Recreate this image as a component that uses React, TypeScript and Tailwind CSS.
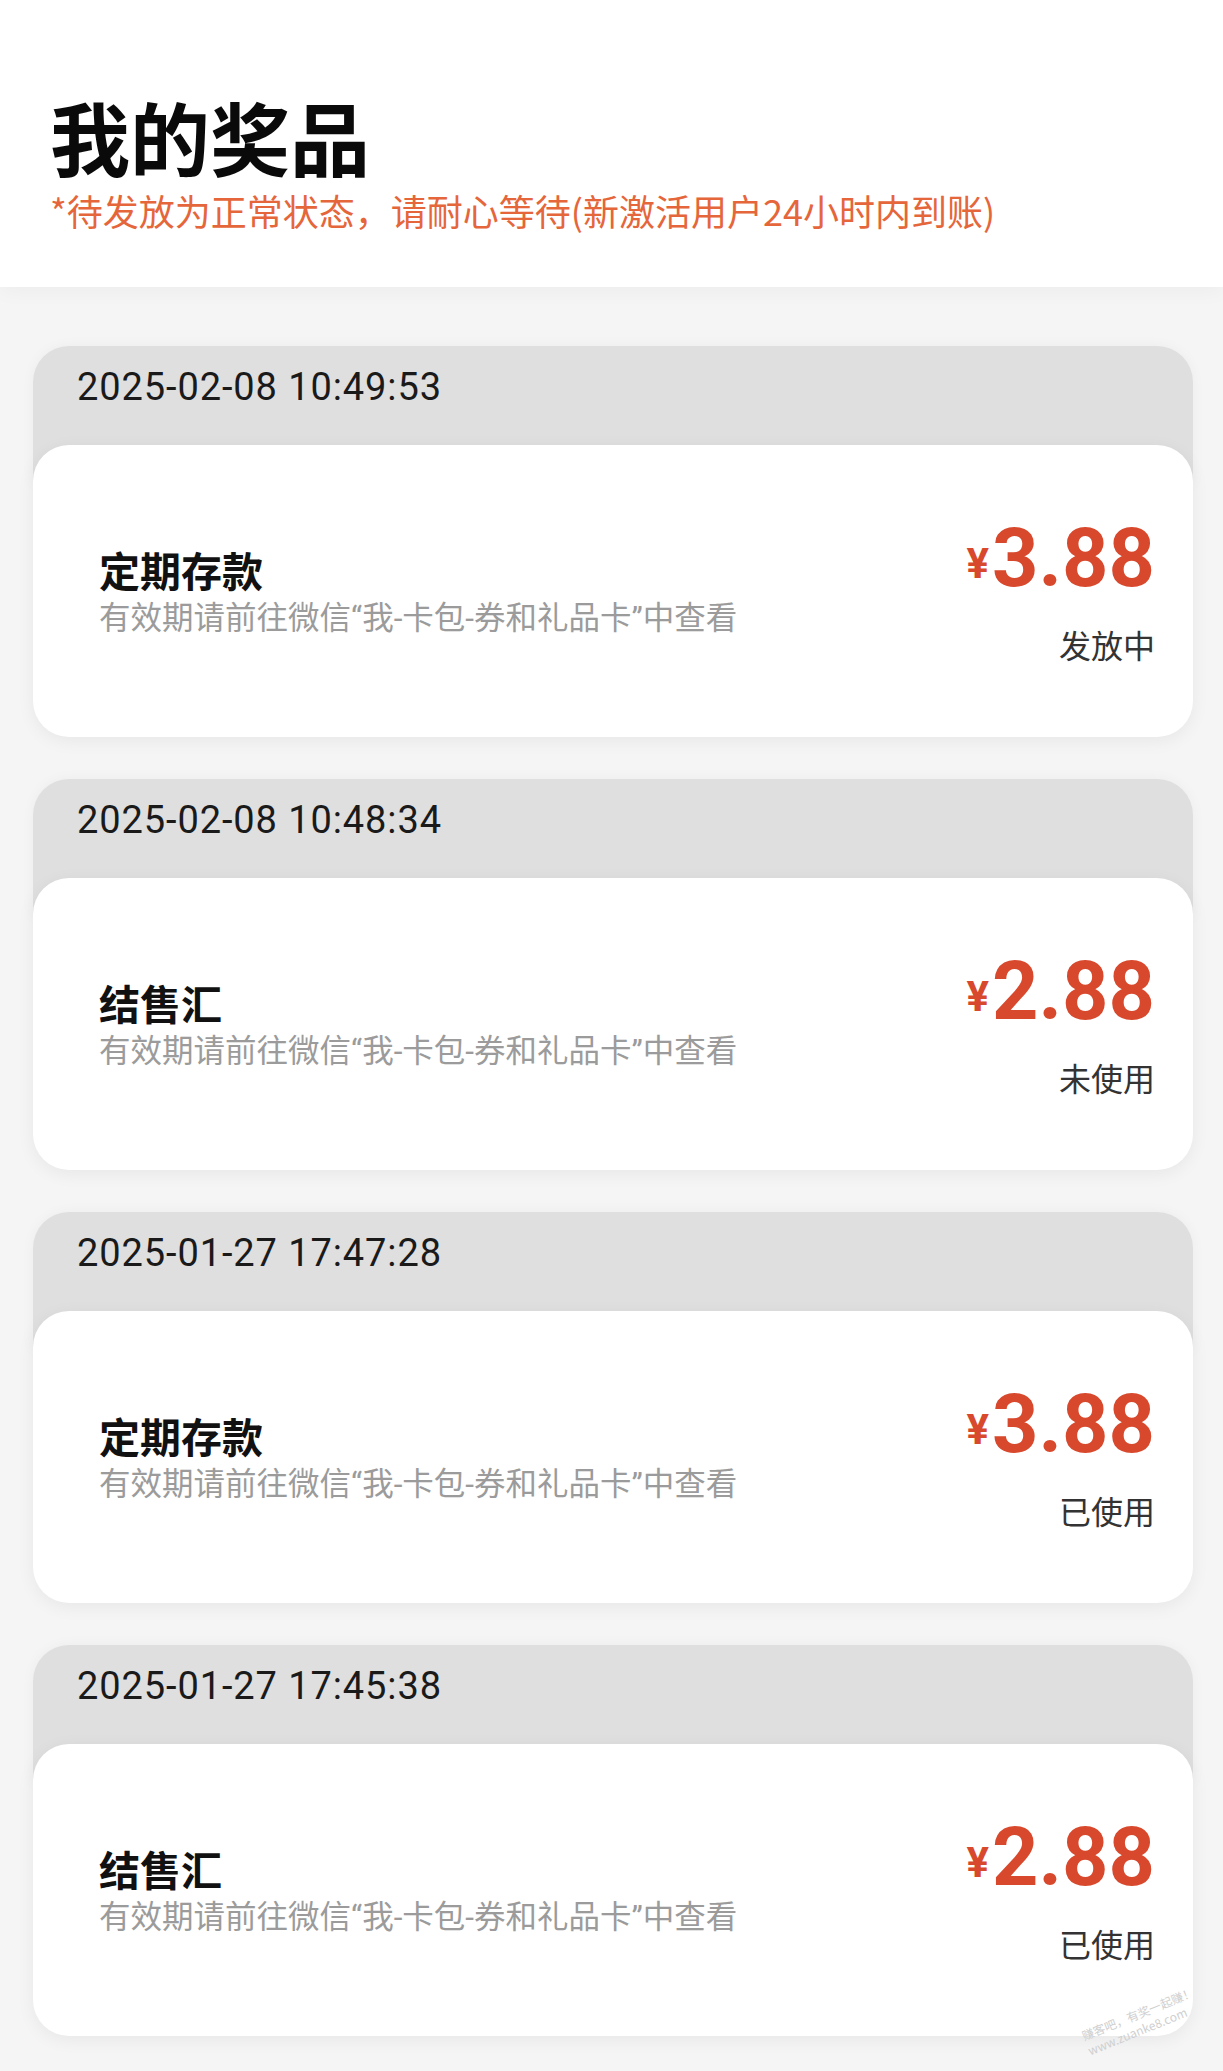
import React from "react";

type Prize = {
  time: string;
  name: string;
  amount: string;
  status: string;
};

const prizes: Prize[] = [
  { time: "2025-02-08 10:49:53", name: "定期存款", amount: "3.88", status: "发放中" },
  { time: "2025-02-08 10:48:34", name: "结售汇", amount: "2.88", status: "未使用" },
  { time: "2025-01-27 17:47:28", name: "定期存款", amount: "3.88", status: "已使用" },
  { time: "2025-01-27 17:45:38", name: "结售汇", amount: "2.88", status: "已使用" },
];

function PrizeCard({ p }: { p: Prize }) {
  return (
    <div className="flex flex-col">
      <div className="h-[139px] rounded-t-[36px] bg-[#dfdfdf] pl-[44px] pt-[18px] shadow-[0_0_14px_rgba(0,0,0,0.04)]">
        <div className="font-['Roboto','Noto_Sans_CJK_SC',sans-serif] text-[38px] leading-[46px] tracking-[0.9px] text-[#1a1a1a]">
          {p.time}
        </div>
      </div>
      <div className="relative -mt-[40px] flex h-[292px] items-center justify-between rounded-[36px] bg-white pl-[66px] pr-[38px] shadow-[0_4px_18px_rgba(0,0,0,0.06)]">
        <div className="flex flex-col">
          <div className="font-['Noto_Sans_CJK_SC',sans-serif] text-[41px] font-bold leading-[52px] text-[#111111]">
            {p.name}
          </div>
          <div className="mt-[4px] font-['Roboto','Noto_Sans_CJK_SC',sans-serif] text-[31.5px] leading-[40px] text-[#9b9b9b]">
            有效期请前往微信“我-卡包-券和礼品卡”中查看
          </div>
        </div>
        <div className="flex flex-col items-end">
          <div className="flex items-end font-['Roboto','Liberation_Sans',sans-serif] font-bold text-[#d8482c]">
            <span className="mb-[14px] mr-[3px] text-[42px] leading-none">¥</span>
            <span className="text-[81px] leading-none">{p.amount}</span>
          </div>
          <div className="mt-[25px] font-['Noto_Sans_CJK_SC',sans-serif] text-[32px] leading-[40px] text-[#333333]">
            {p.status}
          </div>
        </div>
      </div>
    </div>
  );
}

export default function App() {
  return (
    <div className="relative min-h-screen w-full overflow-hidden bg-[#f5f5f5]">
      <header className="relative z-10 bg-white pb-[55px] pl-[50px] pt-[95px] shadow-[0_4px_20px_rgba(0,0,0,0.04)]">
        <h1 className="font-['Noto_Sans_CJK_SC',sans-serif] text-[80px] font-bold leading-[80px] text-[#0a0a0a]">
          我的奖品
        </h1>
        <p className="mt-[13px] font-['Noto_Sans_CJK_SC',sans-serif] text-[36px] leading-[44px] text-[#e5663a]">
          *待发放为正常状态，请耐心等待(新激活用户24小时内到账)
        </p>
      </header>
      <main className="flex flex-col gap-[42px] pb-[34px] pl-[33px] pr-[30px] pt-[59px]">
        {prizes.map((p, i) => (
          <PrizeCard key={i} p={p} />
        ))}
      </main>
      <div className="pointer-events-none absolute bottom-[34px] right-[22px] rotate-[-22deg] font-['Noto_Sans_CJK_SC',sans-serif] text-[12px] leading-[16px] text-[#cfcfcf]">
        赚客吧，有奖一起赚！
        <br />
        www.zuanke8.com
      </div>
    </div>
  );
}
